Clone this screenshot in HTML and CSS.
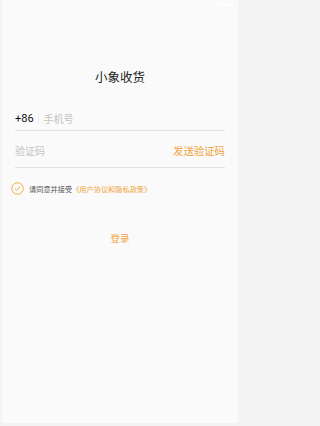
FILE: index.html
```html
<!DOCTYPE html>
<html lang="zh">
<head>
<meta charset="utf-8">
<link rel="stylesheet" href="styles.css">
</head>
<body>
<div class="screen">
  <div class="statusbar">
    <span class="sb-dot"></span><span class="sb-bar"></span>
  </div>
  <h1 class="title">小象收货</h1>
  <div class="field phone">
    <span class="prefix">+86</span>
    <span class="sep"></span>
    <span class="placeholder">手机号</span>
  </div>
  <div class="field code">
    <span class="placeholder">验证码</span>
    <span class="send">发送验证码</span>
  </div>
  <div class="agree">
    <svg class="check" viewBox="0 0 14 14" width="13" height="13">
      <circle cx="7" cy="7" r="6.2" fill="none" stroke="#f0a43a" stroke-width="1"/>
      <path d="M4.2 7.2 L6.2 9.1 L9.9 5.1" fill="none" stroke="#f0a43a" stroke-width="1"/>
    </svg>
    <span class="agree-text">请同意并接受</span><span class="agree-link">《用户协议和隐私政策》</span>
  </div>
  <div class="login">登录</div>
</div>
</body>
</html>
```
FILE: styles.css
```css
html, body {
  margin: 0;
  padding: 0;
}
html { background: #f3f3f3; }
body {
  width: 240px;
  height: 426px;
  background: #f3f3f3;
  font-family: "Noto Sans CJK SC", "Noto Sans", sans-serif;
}
.screen {
  box-sizing: border-box;
  margin: 0 2px;
  height: 423px;
  background: #fafafa;
  display: flex;
  flex-direction: column;
  padding: 0 13px;
}
.statusbar {
  height: 8px;
  display: flex;
  justify-content: flex-end;
  align-items: center;
  gap: 2px;
  margin-right: -8px;
}
.sb-dot, .sb-bar {
  display: block;
  background: #ffffff;
  height: 3px;
}
.sb-dot { width: 3px; border-radius: 50%; }
.sb-bar { width: 10px; }
.title {
  margin: 61px 0 0;
  text-align: center;
  font-size: 12.5px;
  font-weight: 400;
  color: #222;
  line-height: 16px;
}
.field {
  display: flex;
  align-items: center;
  border-bottom: 1px solid #e2e2e2;
}
.phone {
  margin-top: 21px;
  height: 24px;
}
.prefix {
  font-family: "Roboto", "Noto Sans", sans-serif;
  font-size: 11px;
  color: #111;
}
.sep {
  width: 1px;
  height: 12px;
  background: #ececec;
  margin: 0 5px 0 4px;
}
.placeholder {
  font-size: 10px;
  color: #c4c4c4;
}
.code {
  justify-content: space-between;
  height: 34px;
  padding-top: 2px;
}
.send {
  font-size: 10.4px;
  color: #f0a43a;
}
.agree {
  display: flex;
  align-items: center;
  margin: 14px 0 0 -4px;
}
.check { margin-right: 5px; }
.agree-text {
  font-size: 7.2px;
  color: #555;
}
.agree-link {
  font-size: 7.2px;
  color: #f0a43a;
}
.login {
  margin-top: 36px;
  text-align: center;
  font-size: 9.5px;
  color: #f0a43a;
}
```
